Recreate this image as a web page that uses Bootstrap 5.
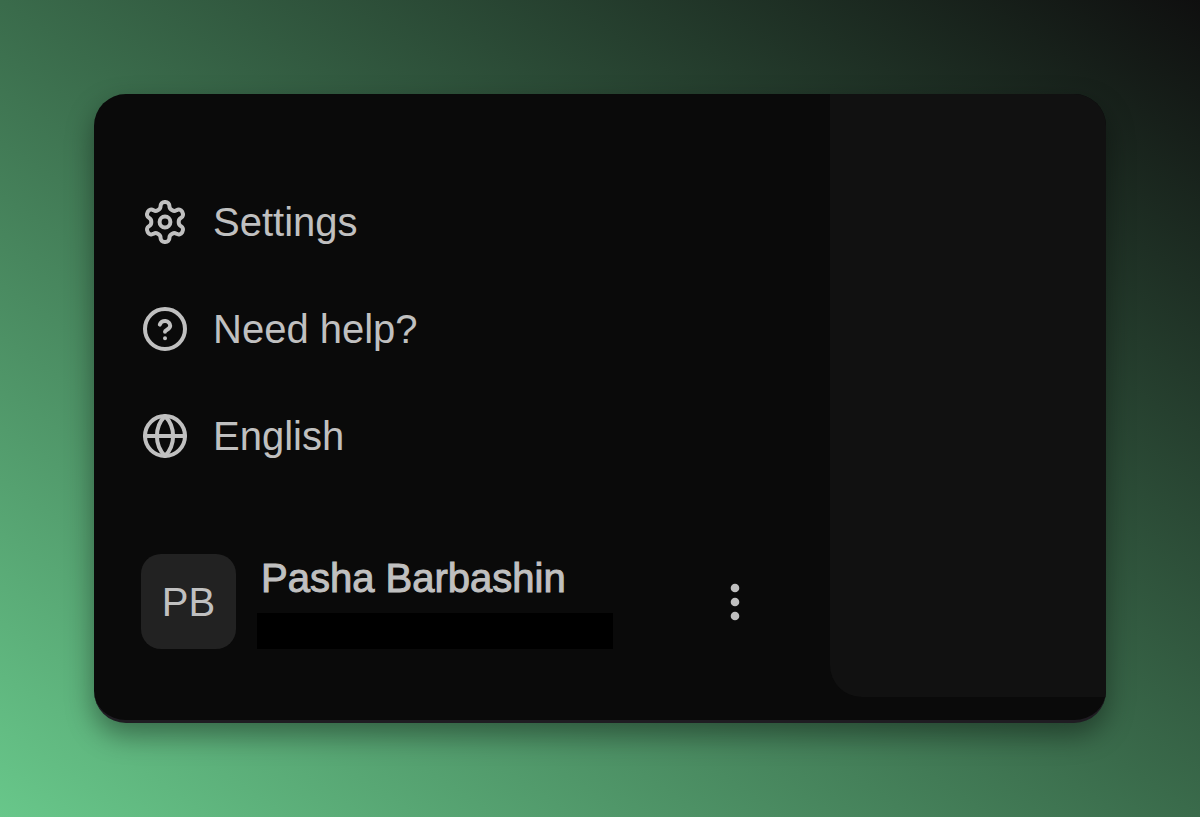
<!DOCTYPE html>
<html lang="en">
<head>
<meta charset="utf-8">
<meta name="viewport" content="width=device-width, initial-scale=1">
<title>Account menu</title>
<link href="https://cdn.jsdelivr.net/npm/bootstrap@5.3.0/dist/css/bootstrap.min.css" rel="stylesheet">
<style>
  body {
    background: linear-gradient(to top right, #68c78a 0%, #3a6b4b 50%, #0f0f0f 100%);
    color: #c0c0c0;
    font: 40px/48px "Liberation Sans", Arial, sans-serif;
    padding: 94px;
  }
  .panel {
    background: #0a0a0a;
    border-bottom: 3px solid #1f1c22;
    border-radius: 32px;
    box-shadow: 0 12px 28px rgba(0, 0, 0, .4);
  }
  .side { padding: 104px 48px 70px 47px; min-width: 0; }
  .preview { flex: none; width: 276px; background: #111; border-bottom-left-radius: 32px; margin-bottom: 23px; }
  .menu { gap: 59px; }
  .menu-link { gap: 24px; color: inherit; }
  .menu-link svg { width: 48px; height: 48px; }
  .menu-link svg, .more svg { flex: none; display: block; }
  .account { margin-top: 94px; gap: 21px; }
  .avatar { width: 95px; height: 95px; border-radius: 20px; background: #222; flex: none; }
  .who { width: 356px; }
  .who-name { padding-left: 4px; -webkit-text-stroke: 1px #c0c0c0; }
  .redacted { height: 36px; background: #000; margin-top: 11px; }
  .more { color: inherit; margin-right: 23px; }
</style>
</head>
<body class="min-vh-100 d-flex">
<main class="panel d-flex flex-grow-1 overflow-hidden">
  <aside class="side flex-grow-1">
    <nav class="menu d-flex flex-column" aria-label="Account">
      <a href="#settings" class="menu-link d-flex align-items-center text-decoration-none">
        <svg viewBox="0 0 24 24" fill="none" stroke="currentColor" stroke-width="2" stroke-linecap="round" stroke-linejoin="round" aria-hidden="true"><path d="M12.220 2h-.44a2 2 0 0 0-2 2v.18a2 2 0 0 1-1 1.730l-.43.25a2 2 0 0 1-2 0l-.15-.08a2 2 0 0 0-2.730.73l-.22.38a2 2 0 0 0 .73 2.730l.15.1a2 2 0 0 1 1 1.720v.51a2 2 0 0 1-1 1.740l-.15.09a2 2 0 0 0-.73 2.730l.22.38a2 2 0 0 0 2.730.73l.15-.08a2 2 0 0 1 2 0l.43.25a2 2 0 0 1 1 1.730V20a2 2 0 0 0 2 2h.44a2 2 0 0 0 2-2v-.18a2 2 0 0 1 1-1.730l.43-.25a2 2 0 0 1 2 0l.15.08a2 2 0 0 0 2.730-.73l.22-.39a2 2 0 0 0-.73-2.730l-.15-.08a2 2 0 0 1-1-1.740v-.5a2 2 0 0 1 1-1.740l.15-.09a2 2 0 0 0 .73-2.730l-.22-.38a2 2 0 0 0-2.730-.73l-.15.08a2 2 0 0 1-2 0l-.43-.25a2 2 0 0 1-1-1.730V4a2 2 0 0 0-2-2z"/><circle cx="12" cy="12" r="2.700"/></svg>
        <span>Settings</span>
      </a>
      <a href="#help" class="menu-link d-flex align-items-center text-decoration-none">
        <svg viewBox="0 0 24 24" fill="none" stroke="currentColor" stroke-width="2" stroke-linecap="round" stroke-linejoin="round" aria-hidden="true"><circle cx="12" cy="12" r="10"/><path d="M9.400 9.800a2.650 2.500 0 0 1 5.200.6c0 1.800-2.600 2-2.600 3M12 16.600h.01"/></svg>
        <span>Need help?</span>
      </a>
      <a href="#language" class="menu-link d-flex align-items-center text-decoration-none">
        <svg viewBox="0 0 24 24" fill="none" stroke="currentColor" stroke-width="2" stroke-linecap="round" stroke-linejoin="round" aria-hidden="true"><circle cx="12" cy="12" r="10"/><path d="M2 12h20M12 2c5.400 5.500 5.400 14.500 0 20M12 2c-5.400 5.500-5.400 14.500 0 20"/></svg>
        <span>English</span>
      </a>
    </nav>
    <div class="account d-flex align-items-center">
      <div class="avatar d-flex align-items-center justify-content-center">PB</div>
      <div class="who">
        <div class="who-name text-nowrap">Pasha Barbashin</div>
        <div class="redacted"></div>
      </div>
      <button type="button" class="more btn border-0 p-0 ms-auto" aria-label="More options">
        <svg width="48" height="48" viewBox="0 0 48 48" fill="currentColor" aria-hidden="true"><circle cx="24" cy="10" r="4.300"/><circle cx="24" cy="24" r="4.300"/><circle cx="24" cy="38" r="4.300"/></svg>
      </button>
    </div>
  </aside>
  <section class="preview" aria-label="Content"></section>
</main>
<script src="https://cdn.jsdelivr.net/npm/bootstrap@5.3.0/dist/js/bootstrap.bundle.min.js"></script>
</body>
</html>
